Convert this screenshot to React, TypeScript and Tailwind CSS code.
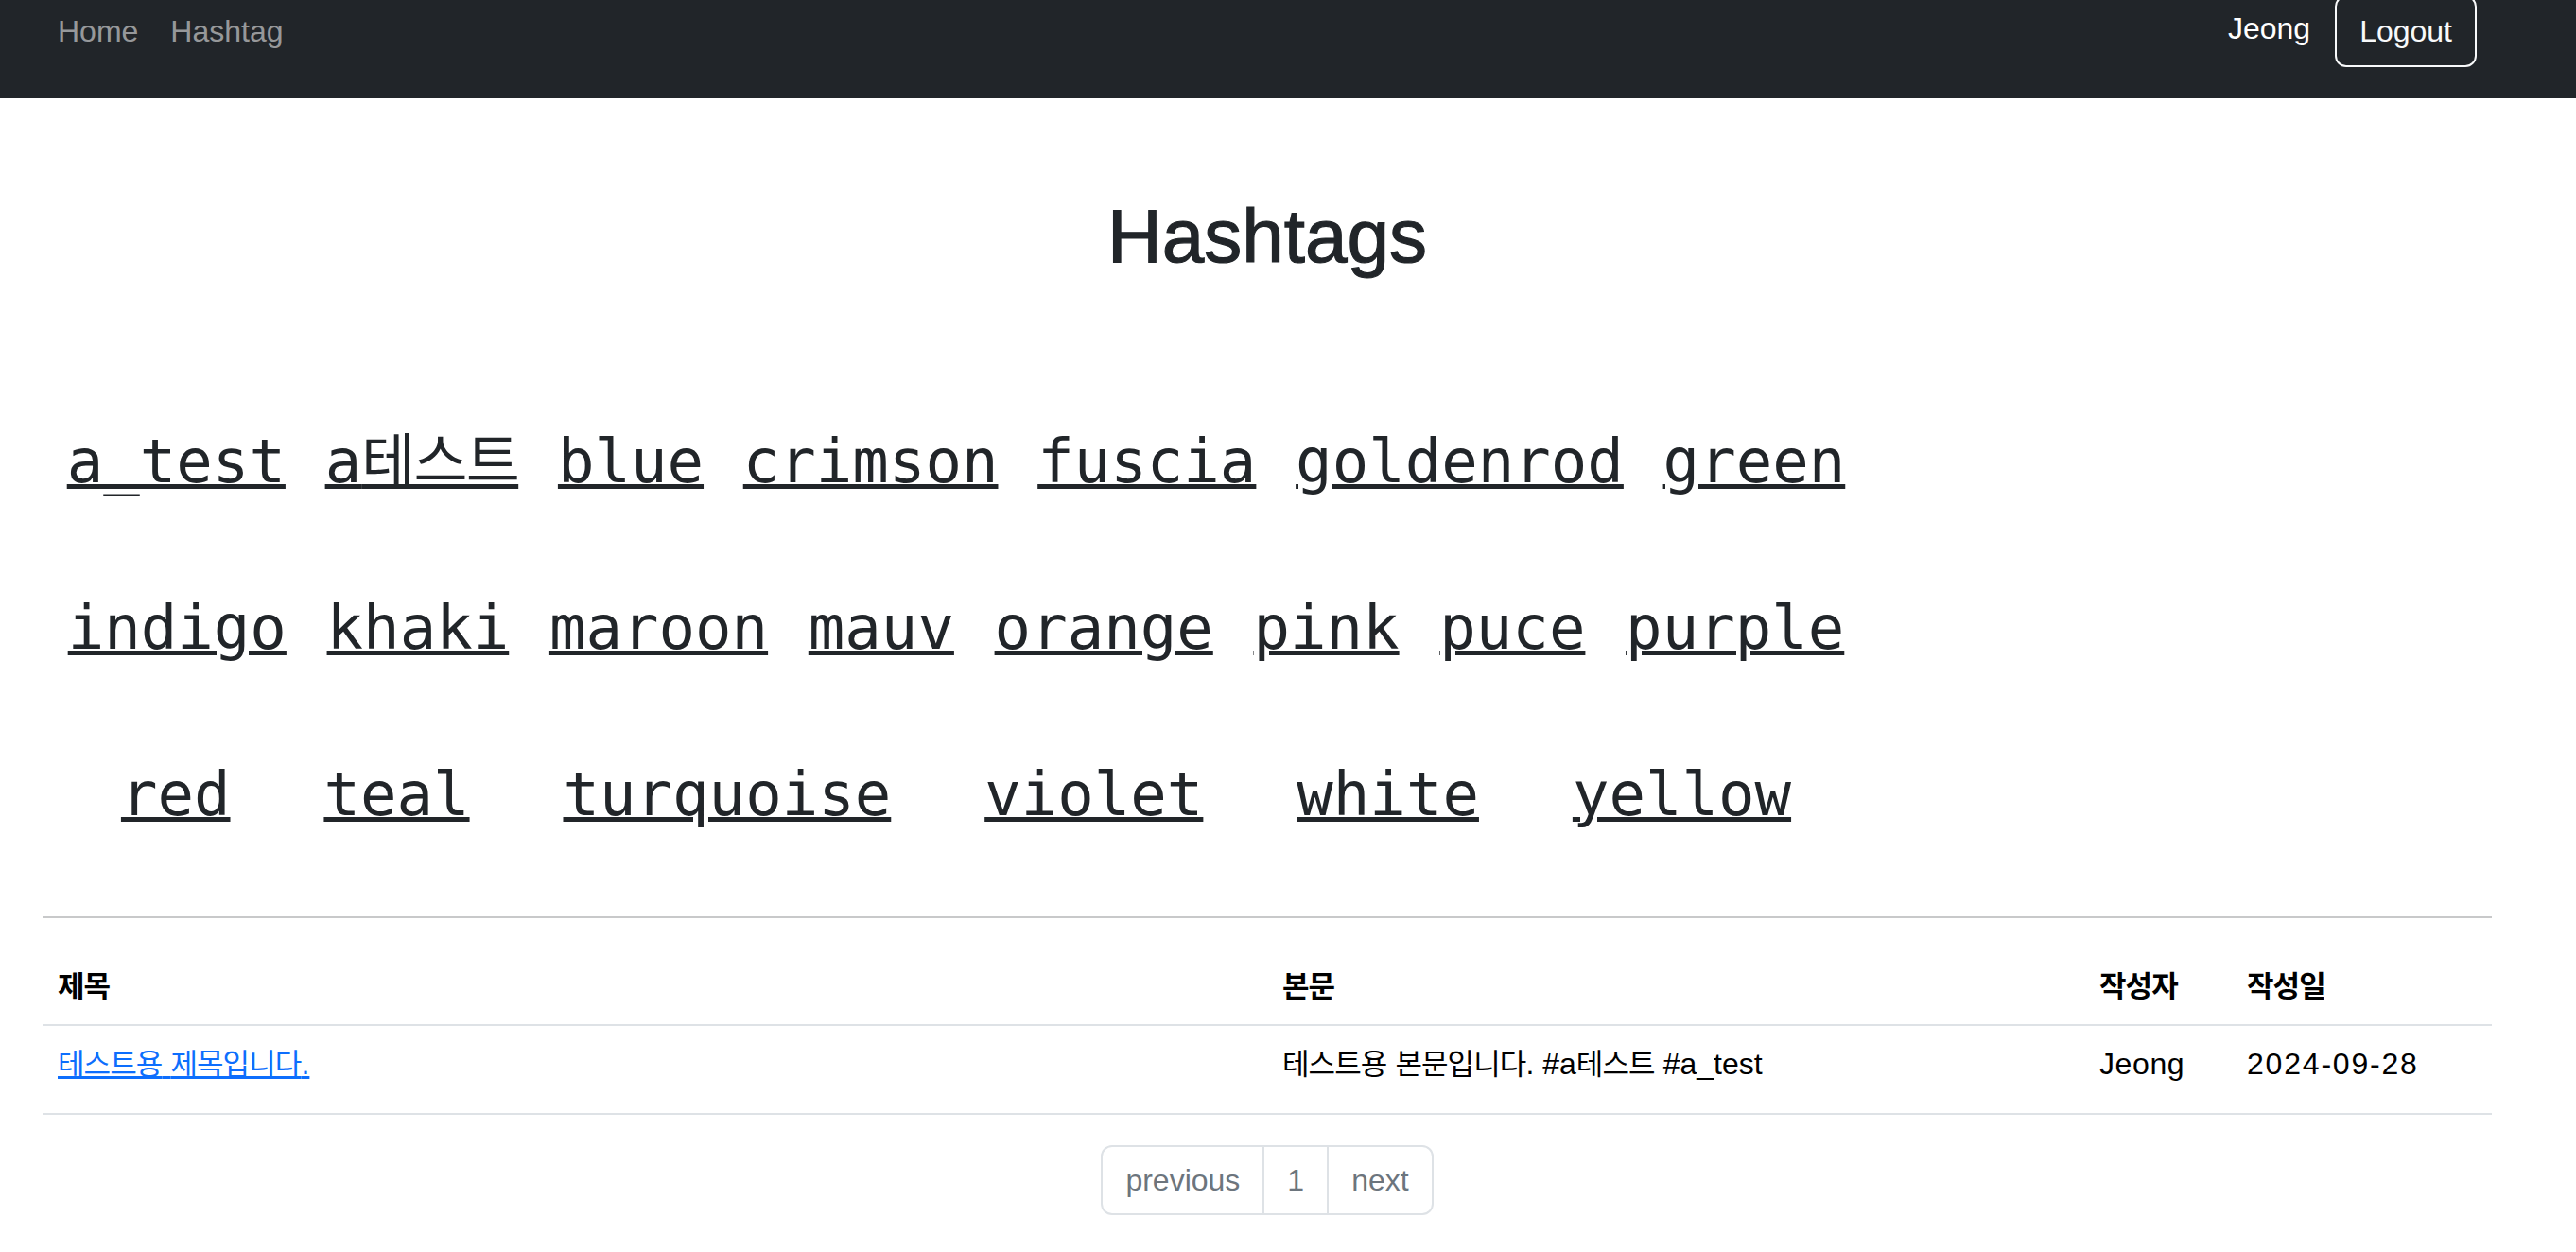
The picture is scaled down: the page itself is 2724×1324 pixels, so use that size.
import React from "react";

const HANGUL = /([\uAC00-\uD7A3\u3131-\u318E]+)/;

function K({ text, kcls }: { text: string; kcls: string }) {
  const parts = text.split(HANGUL);
  return (
    <>
      {parts.map((p, i) =>
        HANGUL.test(p) ? (
          <span key={i} className={kcls}>
            {p}
          </span>
        ) : (
          <React.Fragment key={i}>{p}</React.Fragment>
        )
      )}
    </>
  );
}

const TAGS = [
  "a_test",
  "a테스트",
  "blue",
  "crimson",
  "fuscia",
  "goldenrod",
  "green",
  "indigo",
  "khaki",
  "maroon",
  "mauv",
  "orange",
  "pink",
  "puce",
  "purple",
  "red",
  "teal",
  "turquoise",
  "violet",
  "white",
  "yellow",
];

const TABLE_K = "text-[31px] tracking-[-0.9px]";

export default function App() {
  return (
    <div className="min-h-screen bg-white font-['Liberation_Sans','Noto_Sans_CJK_KR',sans-serif] text-[#212529]">
      {/* Navbar */}
      <header className="flex h-[104px] items-start justify-between overflow-hidden bg-[#212529] text-[32px] leading-[48px]">
        <nav className="flex gap-[34px] pl-[61px] pt-[9px]">
          <a className="text-[rgba(255,255,255,0.55)]">Home</a>
          <a className="text-[rgba(255,255,255,0.55)]">Hashtag</a>
        </nav>
        <div className="flex items-start pr-[105px]">
          <span className="mt-[6px] text-white">Jeong</span>
          <button className="ml-[26px] mt-[-5px] rounded-[12px] border-2 border-[#f8f9fa] px-[24px] py-[12px] text-[32px] leading-[48px] text-[#f8f9fa]">
            Logout
          </button>
        </div>
      </header>

      <main className="pl-[45px] pr-[89px]">
        <h1 className="mt-[98px] text-center text-[80px] font-medium leading-[96px] text-[#212529] [-webkit-text-stroke:1.2px_#212529]">
          Hashtags
        </h1>

        <div className="mt-[102px] flex w-[1932px] flex-wrap justify-evenly font-['DejaVu_Sans_Mono','Noto_Sans_CJK_KR',monospace] text-[64px] leading-[176px]">
          {TAGS.map((t) => (
            <div key={t} className="h-[176px] px-[16px]">
              <a className="text-[#212529] underline decoration-[#212529] decoration-5 underline-offset-[2px]">
                <K text={t} kcls="text-[62px] tracking-[-1.7px]" />
              </a>
            </div>
          ))}
        </div>

        <div className="mt-[41px] h-[2px] bg-[#c8c9ca]" />

        <div className="mt-[32px] text-[32px] leading-[48px] text-black">
          <div className="grid h-[82px] grid-cols-[1295px_864px_156px_275px] border-b-2 border-[#dee2e6] font-bold">
            <div className="px-[16px] pt-[16px]">
              <K text="제목" kcls={TABLE_K} />
            </div>
            <div className="px-[16px] pt-[16px]">
              <K text="본문" kcls={TABLE_K} />
            </div>
            <div className="px-[16px] pt-[16px]">
              <K text="작성자" kcls={TABLE_K} />
            </div>
            <div className="px-[16px] pt-[16px]">
              <K text="작성일" kcls={TABLE_K} />
            </div>
          </div>
          <div className="grid h-[94px] grid-cols-[1295px_864px_156px_275px] border-b-2 border-[#dee2e6]">
            <div className="px-[16px] pt-[16px]">
              <a className="text-[#0d6efd] underline decoration-[#0d6efd]">
                <K text="테스트용 제목입니다." kcls={TABLE_K} />
              </a>
            </div>
            <div className="px-[16px] pt-[16px]">
              <K text="테스트용 본문입니다. #a테스트 #a_test" kcls={TABLE_K} />
            </div>
            <div className="px-[16px] pt-[16px] tracking-[0.6px]">Jeong</div>
            <div className="px-[16px] pt-[16px] tracking-[1.8px]">2024-09-28</div>
          </div>
        </div>

        <div className="mt-[32px] flex justify-center">
          <div className="flex rounded-[12px] border-2 border-[#dee2e6] text-[32px] leading-[48px] text-[#6c757d]">
            <a className="px-[24px] py-[11px]">previous</a>
            <a className="border-l-2 border-[#dee2e6] px-[24px] py-[11px]">1</a>
            <a className="border-l-2 border-[#dee2e6] px-[24px] py-[11px]">next</a>
          </div>
        </div>
      </main>
    </div>
  );
}
